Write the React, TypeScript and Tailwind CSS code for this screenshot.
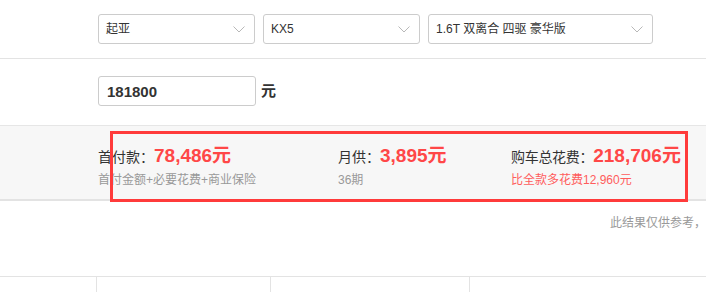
import React from "react";

const font = { fontFamily: '"Liberation Sans", "Noto Sans CJK SC", sans-serif' };

function Chevron() {
  return (
    <svg width="12" height="7" viewBox="0 0 12 7" className="shrink-0">
      <path d="M0.5 0.5 L6 6 L11.5 0.5" fill="none" stroke="#b8b8b8" strokeWidth="1" />
    </svg>
  );
}

function Select({ w, text }: { w: string; text: string }) {
  return (
    <div className={`${w} h-[30px] border border-[#cccccc] rounded-[3px] flex items-center justify-between pl-[7px] pr-[9px] bg-white`}>
      <span className="text-[12px] text-[#333333] leading-none whitespace-nowrap">{text}</span>
      <Chevron />
    </div>
  );
}

export default function App() {
  return (
    <div className="w-[706px] h-[292px] overflow-hidden bg-white relative" style={font}>
      {/* Row 1 selects */}
      <div className="h-[59px] border-b border-[#e3e3e3] pl-[98px] pt-[14px] flex gap-[8px]">
        <Select w="w-[157px]" text="起亚" />
        <Select w="w-[157px]" text="KX5" />
        <Select w="w-[225px]" text="1.6T 双离合 四驱 豪华版" />
      </div>
      {/* Row 2 price input */}
      <div className="h-[66px] pl-[98px] pt-[17px] flex items-start">
        <div className="w-[158px] h-[30px] border border-[#cccccc] rounded-[3px] flex items-center pl-[8px]">
          <span className="text-[15px] font-bold text-[#333333] leading-none">181800</span>
        </div>
        <span className="ml-[5px] h-[30px] flex items-center text-[15px] font-bold text-[#333333]">元</span>
      </div>
      {/* Result band */}
      <div className="h-[76px] bg-[#f7f7f7] border-t border-[#e6e6e6] border-b-2 border-b-[#e3e3e3] pl-[98px] pt-[16px] flex">
        <div className="w-[240px]">
          <div className="flex items-baseline h-[26px]">
            <span className="text-[14px] text-[#333333]">首付款：</span>
            <span className="text-[19px] font-bold text-[#ff4747]">78,486元</span>
          </div>
          <div className="mt-[4px] text-[12px] leading-[16px] text-[#999999]">首付金额+必要花费+商业保险</div>
        </div>
        <div className="w-[173px]">
          <div className="flex items-baseline h-[26px]">
            <span className="text-[14px] text-[#333333]">月供：</span>
            <span className="text-[19px] font-bold text-[#ff4747]">3,895元</span>
          </div>
          <div className="mt-[4px] text-[12px] leading-[16px] text-[#999999]">36期</div>
        </div>
        <div>
          <div className="flex items-baseline h-[26px]">
            <span className="text-[14px] text-[#333333] tracking-[-0.3px]">购车总花费：</span>
            <span className="text-[19px] font-bold text-[#ff4747]">218,706元</span>
          </div>
          <div className="mt-[4px] text-[12px] leading-[16px] text-[#ff5c5c]">比全款多花费12,960元</div>
        </div>
      </div>
      {/* Note */}
      <div className="h-[75px] pl-[610px] pt-[9px]">
        <span className="text-[12px] leading-[16px] text-[#999999] whitespace-nowrap">此结果仅供参考，</span>
      </div>
      {/* Bottom table edge */}
      <div className="h-[20px] border-t border-[#e3e3e3] flex">
        <div className="w-[97px] border-r border-[#e3e3e3]" />
        <div className="w-[174px] border-r border-[#e3e3e3]" />
        <div className="w-[199px] border-r border-[#e3e3e3]" />
        <div className="flex-1" />
      </div>
      {/* Red annotation box */}
      <div className="absolute left-[110px] top-[131px] w-[578px] h-[71px] border-[3px] border-[#ff3b3b]" />
    </div>
  );
}
